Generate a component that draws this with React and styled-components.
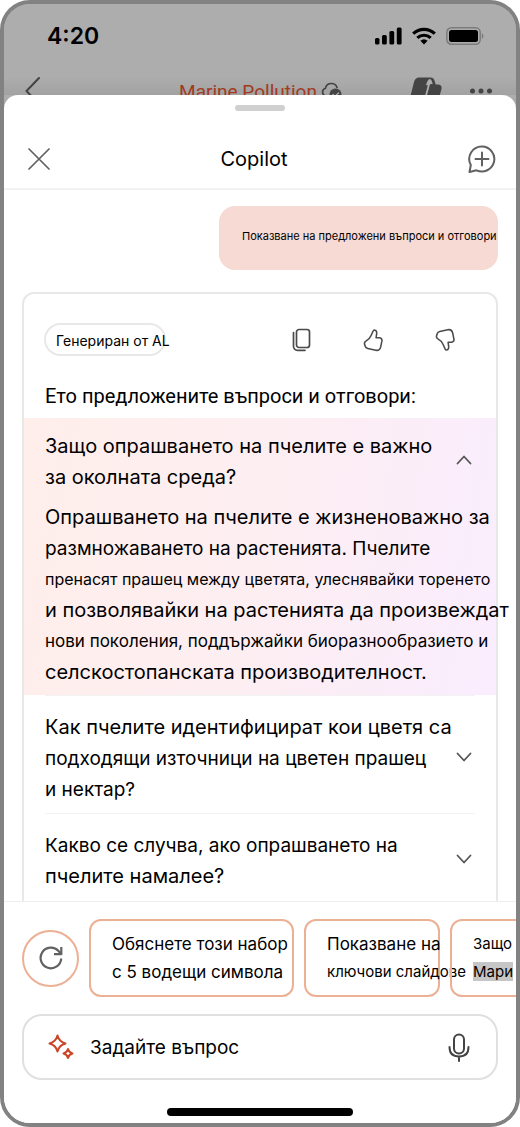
import React from "react";
import styled, { createGlobalStyle } from "styled-components";

const GlobalStyle = createGlobalStyle`
	* {
		box-sizing: border-box;
	}
	body {
		margin: 0;
		background: #fff;
		color: #000;
		font-family: Inter, "Liberation Sans", sans-serif;
	}
	button,
	input {
		font: inherit;
		color: inherit;
		padding: 0;
		border: none;
		background: none;
	}
	h1,
	h2,
	p {
		margin: 0;
		font-weight: 400;
	}
	svg {
		display: block;
		flex: none;
	}
`;

const Phone = styled.main`
	display: flex;
	flex-direction: column;
	height: 100vh;
	overflow: hidden;
	border: 4px solid #828282;
	border-radius: 30px;
	background: #adadad;
`;

const Backdrop = styled.div`
	flex: none;
	height: 91px;
	overflow: hidden;
	background: linear-gradient(#adadad 80%, #a2a2a2);
`;

const StatusBar = styled.div`
	display: flex;
	align-items: center;
	justify-content: space-between;
	height: 64px;
	padding: 0 32px 0 43px;
	font-size: 23px;
	font-weight: 600;
`;

const StatusIcons = styled.div`
	display: flex;
	align-items: center;
	gap: 10px;
`;

const DocumentBar = styled.div`
	display: grid;
	grid-template-columns: 1fr auto 1fr;
	align-items: center;
	height: 46px;
	padding: 0 24px 0 20px;
	color: #444;
`;

const DocumentTitle = styled.div`
	display: flex;
	align-items: center;
	gap: 4px;
	margin-left: 6px;
	color: #a23a22;
	font-family: Roboto, sans-serif;
	font-size: 19px;
`;

const DocumentActions = styled.div`
	display: flex;
	align-items: center;
	justify-content: flex-end;
	gap: 28px;
`;

const Sheet = styled.section`
	display: flex;
	flex: 1;
	flex-direction: column;
	min-height: 0;
	border-radius: 14px 14px 0 0;
	background: #fff;
`;

const Handle = styled.div`
	flex: none;
	width: 50px;
	height: 6px;
	margin: 10px auto 0;
	border-radius: 3px;
	background: #d0d0d0;
`;

const SheetHeader = styled.header`
	display: grid;
	flex: none;
	grid-template-columns: 1fr auto 1fr;
	align-items: center;
	height: 79px;
	padding: 18px 20px 0 24px;
	border-bottom: 2px solid #f2f2f2;
	color: #616161;
	h1 {
		padding-right: 16px;
		color: #000;
		font-size: 20px;
	}
`;

const IconButton = styled.button`
	display: flex;
	justify-self: ${(props) => props.$side || "start"};
`;

const Conversation = styled.div`
	display: flex;
	flex: 1;
	flex-direction: column;
	gap: 22px;
	min-height: 0;
	overflow: hidden;
	padding: 16px 18px 0;
`;

const UserMessage = styled.p`
	flex: none;
	align-self: flex-end;
	width: 279px;
	padding: 18px 0 22px 23px;
	border-radius: 16px;
	background: #f6dad3;
	font-size: 11px;
	line-height: 24px;
	white-space: nowrap;
`;

const AnswerCard = styled.article`
	flex: 1 0 auto;
	border: 2px solid #e8e8e8;
	border-bottom: none;
	border-radius: 12px 12px 0 0;
`;

const CardToolbar = styled.div`
	display: flex;
	align-items: center;
	justify-content: space-between;
	padding: 29px 40px 0 20px;
	color: #4a4a4a;
`;

const Badge = styled.span`
	width: 122px;
	height: 33px;
	padding-left: 10px;
	border: 2px solid #e8e8e8;
	border-radius: 17px;
	color: #000;
	font-size: 14px;
	line-height: 32px;
	white-space: nowrap;
`;

const Feedback = styled.div`
	display: flex;
	gap: 50px;
`;

const Intro = styled.p`
	padding: 25px 21px 6px;
	font-family: Roboto, sans-serif;
	font-size: 20px;
	line-height: 31px;
	white-space: nowrap;
`;

const Item = styled.div`
	padding: ${(props) => (props.$open ? "13px 0 7px 21px" : "0 21px")};
	background: ${(props) =>
		props.$open ? "linear-gradient(100deg, #ffeeea, #fdeef2 50%, #faedfe)" : "none"};
`;

const Question = styled.button`
	display: flex;
	align-items: center;
	justify-content: space-between;
	width: 100%;
	padding: ${(props) => (props.$open ? "0 24px 0 0" : "16px 3px 8px 0")};
	border-top: ${(props) => (props.$open ? "none" : "1px solid #f2f2f2")};
	text-align: left;
	svg {
		margin-bottom: 4px;
	}
`;

const Answer = styled.p`
	margin-top: 9px;
`;

const Line = styled.span`
	display: block;
	font-size: ${(props) => props.$size || 20}px;
	line-height: 31px;
	white-space: nowrap;
`;

const Footer = styled.footer`
	display: flex;
	flex: none;
	flex-direction: column;
	padding: 17px 18px 7px;
	border-top: 1px solid #eee;
	background: #fff;
`;

const Suggestions = styled.div`
	display: flex;
	align-items: center;
	gap: 10px;
	margin-right: -18px;
	overflow: hidden;
`;

const RefreshButton = styled.button`
	display: flex;
	flex: none;
	align-items: center;
	justify-content: center;
	width: 57px;
	height: 57px;
	border: 2px solid #ecb095;
	border-radius: 50%;
	color: #616161;
`;

const Chip = styled.button`
	flex: none;
	width: ${(props) => props.$width}px;
	height: 78px;
	padding-left: 21px;
	border: 2px solid #ecb095;
	border-radius: 12px;
	text-align: left;
`;

const ChipLine = styled.span`
	display: block;
	font-size: ${(props) => props.$size}px;
	line-height: 28px;
	white-space: nowrap;
	mark {
		background: #c6c6c6;
		color: inherit;
	}
`;

const Prompt = styled.label`
	display: flex;
	align-items: center;
	height: 66px;
	margin-top: 17px;
	padding: 0 26px 0 24px;
	border: 2px solid #e0e0e0;
	border-radius: 20px;
	input {
		flex: 1;
		min-width: 0;
		margin-left: 16px;
		font-size: 19px;
		outline: none;
	}
	input::placeholder {
		color: #000;
		opacity: 1;
	}
`;

const HomeBar = styled.div`
	align-self: center;
	width: 186px;
	height: 8px;
	margin-top: 28px;
	border-radius: 4px;
	background: #000;
`;

function Icon({ width = 24, height = width, children, ...rest }) {
	return (
		<svg
			width={width}
			height={height}
			viewBox={`0 0 ${width} ${height}`}
			fill="none"
			stroke="currentColor"
			strokeWidth="1.7"
			strokeLinecap="round"
			strokeLinejoin="round"
			aria-hidden="true"
			{...rest}
		>
			{children}
		</svg>
	);
}

const Signal = () => (
	<Icon width={28} height={18} fill="currentColor" stroke="none">
		<rect x="1" y="11" width="4.5" height="6.5" rx="1.5" />
		<rect x="8" y="8" width="4.8" height="9.5" rx="1.5" />
		<rect x="15.4" y="4" width="4.8" height="13.5" rx="1.5" />
		<rect x="22.8" y="0.5" width="4.8" height="17" rx="1.5" />
	</Icon>
);

const Wifi = () => (
	<Icon width={24} height={18} strokeWidth="3.2" strokeLinecap="butt">
		<path d="M1.2 6.6a15.8 15.8 0 0 1 21.6 0" />
		<path d="M5.3 10.9a9.8 9.8 0 0 1 13.4 0" />
		<path d="M8.4 13.8a5.4 5.4 0 0 1 7.2 0L12 17.4z" fill="currentColor" stroke="none" />
	</Icon>
);

const Battery = () => (
	<Icon width={38} height={18}>
		<rect x="0.8" y="0.8" width="33.4" height="16.4" rx="4.5" stroke="#7c7c7c" strokeWidth="1.5" />
		<rect x="3" y="3" width="29" height="12" rx="2.5" fill="#000" stroke="none" />
		<path d="M35.8 6.2c2.2.9 2.2 4.7 0 5.6z" fill="#7c7c7c" stroke="none" />
	</Icon>
);

const Back = () => (
	<Icon width={18} height={28}>
		<path d="M15 1 2.5 14 15 27" strokeWidth="2" />
	</Icon>
);

const CloudCheck = () => (
	<Icon width={22} height={18} stroke="#444">
		<path d="M8 14H5a4 4 0 0 1-.5-7.8C5 3.5 7.500 1.500 10.500 1.500c2.700 0 4.700 1.500 5.500 4" />
		<circle cx="14.500" cy="12.500" r="6" fill="#444" stroke="none" />
		<path d="m12 12.500 2 2 3.500-3.500" stroke="#adadad" strokeWidth="1.400" />
	</Icon>
);

const CopilotLogo = () => (
	<Icon width={32} height={28} fill="currentColor" stroke="none">
		<path d="M9 .5h11.500c2.500 0 3.600 1.500 4.300 4l.9 3H28c3 0 4 2 3.500 4.500L28.500 23c-.6 2.500-2 4-4.500 4H11c-2 0-3-1.500-3.600-3.500L7 21H3.500C1.500 21 .5 19.500 1 17L4 5C4.900 2 6.500.5 9 .5z" />
		<path
			d="M16 8.300c1-3.800 2.200-6.200 4-6.300 1.300 0 2 2.200 2.700 5-2.200 0-3.500.3-4.500 1.300z"
			fill="#adadad"
		/>
		<path d="M19 7.500 14.500 24" stroke="#adadad" strokeWidth="1.800" />
	</Icon>
);

const More = () => (
	<Icon width={22} height={6} fill="currentColor" stroke="none">
		<circle cx="2.5" cy="3" r="2.5" />
		<circle cx="11" cy="3" r="2.5" />
		<circle cx="19.5" cy="3" r="2.5" />
	</Icon>
);

const Close = () => (
	<Icon width={22}>
		<path d="m1 1 20 20M21 1 1 21" />
	</Icon>
);

const NewChat = () => (
	<Icon width={28} strokeWidth="2">
		<path d="M14 1.500A12.500 12.500 0 1 1 8.500 25.300L1.500 27l1.300-7A12.500 12.500 0 0 1 14 1.500z" />
		<path d="M14 7.500v13M7.500 14h13" />
	</Icon>
);

const Copy = () => (
	<Icon width={20} height={24}>
		<rect x="4.500" y="1.500" width="13" height="18" rx="2.500" />
		<path d="M1.500 4.500v13.800a4 4 0 0 0 4 4h7.500" />
	</Icon>
);

const Thumb = ({ down }) => (
	<Icon width={22} height={24} viewBox="0 0 24 24">
		<path
			transform={down ? "matrix(1 0 0 -1 0 24)" : undefined}
			d="M13.500 1c1.800.1 2.700 1.700 2.500 4l-.6 4.500h3.200c2.400 0 3.500 1.500 3.100 3.800l-1.300 6.200c-.7 3-2.600 4.300-5.500 3.700l-8.600-1.900c-1.500-.3-2.400-1.100-2.800-2.400l-.7-2.200c-.5-1.600.2-2.700 1.500-3.500 3.200-1.700 4.500-3.300 5.800-6.400l2-4.600c.3-.8.700-1.200 1.400-1.200z"
		/>
	</Icon>
);

const Chevron = ({ up }) => (
	<Icon width={16} height={10} stroke="#555" strokeWidth="1.8">
		<path d={up ? "m1.500 8.500 6.500-7 6.500 7" : "m1.500 1.500 6.500 7 6.500-7"} />
	</Icon>
);

const Refresh = () => (
	<Icon width={24} strokeWidth="2.2" strokeLinecap="butt">
		<path d="M22.200 12.500A10.300 10.300 0 1 1 19.500 5l2 2.200" />
		<path d="M22.300 1v7.200H15" />
	</Icon>
);

const Sparkles = () => (
	<Icon width={26} stroke="#cb4526" strokeWidth="2">
		<path d="M9.500 1.500c1.200 4.500 3.500 6.800 8 8-4.500 1.200-6.800 3.500-8 8-1.200-4.500-3.500-6.800-8-8 4.500-1.200 6.800-3.500 8-8z" />
		<path d="M20 15c.7 2.700 1.800 3.800 4.500 4.500-2.700.7-3.800 1.800-4.500 4.500-.7-2.700-1.800-3.800-4.500-4.500 2.700-.7 3.800-1.800 4.500-4.500z" />
	</Icon>
);

const Mic = () => (
	<Icon width={22} height={29} stroke="#444" strokeWidth="2">
		<rect x="6" y="1.500" width="10" height="19" rx="5" />
		<path d="M1.500 14c0 6 3.500 9.500 9.500 9.500s9.500-3.500 9.500-9.500M11 23.500V28" />
	</Icon>
);

const questions = [
	{
		lines: [{ text: "Защо опрашването на пчелите е важно" }, { text: "за околната среда?" }],
		answer: [
			{ text: "Опрашването на пчелите е жизненоважно за" },
			{ text: "размножаването на растенията. Пчелите", size: 19 },
			{ text: "пренасят прашец между цветята, улеснявайки торенето", size: 16 },
			{ text: "и позволявайки на растенията да произвеждат" },
			{ text: "нови поколения, поддържайки биоразнообразието и", size: 17 },
			{ text: "селскостопанската производителност." },
		],
	},
	{
		lines: [
			{ text: "Как пчелите идентифицират кои цветя са" },
			{ text: "подходящи източници на цветен прашец", size: 19 },
			{ text: "и нектар?", size: 19 },
		],
	},
	{
		lines: [
			{ text: "Какво се случва, ако опрашването на", size: 19 },
			{ text: "пчелите намалее?" },
		],
	},
];

const Lines = ({ lines }) =>
	lines.map(({ text, size }) => (
		<Line key={text} $size={size}>
			{text}
		</Line>
	));

export default function App() {
	return (
		<>
			<GlobalStyle />
			<Phone>
				<Backdrop>
					<StatusBar>
						<span>4:20</span>
						<StatusIcons>
							<Signal />
							<Wifi />
							<Battery />
						</StatusIcons>
					</StatusBar>
					<DocumentBar>
						<Back />
						<DocumentTitle>
							Marine Pollution
							<CloudCheck />
						</DocumentTitle>
						<DocumentActions>
							<CopilotLogo />
							<More />
						</DocumentActions>
					</DocumentBar>
				</Backdrop>
				<Sheet>
					<Handle />
					<SheetHeader>
						<IconButton aria-label="Close">
							<Close />
						</IconButton>
						<h1>Copilot</h1>
						<IconButton $side="end" aria-label="New chat">
							<NewChat />
						</IconButton>
					</SheetHeader>
					<Conversation>
						<UserMessage>Показване на предложени въпроси и отговори</UserMessage>
						<AnswerCard>
							<CardToolbar>
								<Badge>Генериран от AL</Badge>
								<Feedback>
									<IconButton aria-label="Copy">
										<Copy />
									</IconButton>
									<IconButton aria-label="Like">
										<Thumb />
									</IconButton>
									<IconButton aria-label="Dislike">
										<Thumb down />
									</IconButton>
								</Feedback>
							</CardToolbar>
							<Intro>Ето предложените въпроси и отговори:</Intro>
							{questions.map(({ lines, answer }) => (
								<Item key={lines[0].text} $open={!!answer}>
									<Question $open={!!answer} aria-expanded={!!answer}>
										<span>
											<Lines lines={lines} />
										</span>
										<Chevron up={!!answer} />
									</Question>
									{answer && (
										<Answer>
											<Lines lines={answer} />
										</Answer>
									)}
								</Item>
							))}
						</AnswerCard>
					</Conversation>
					<Footer>
						<Suggestions>
							<RefreshButton aria-label="Refresh">
								<Refresh />
							</RefreshButton>
							<Chip $width={205}>
								<ChipLine $size={17}>Обяснете този набор</ChipLine>
								<ChipLine $size={17}>с 5 водещи символа</ChipLine>
							</Chip>
							<Chip $width={136}>
								<ChipLine $size={17}>Показване на</ChipLine>
								<ChipLine $size={15}>ключови слайдове</ChipLine>
							</Chip>
							<Chip $width={136}>
								<ChipLine $size={15}>Защо</ChipLine>
								<ChipLine $size={15}>
									<mark>Мари</mark>
								</ChipLine>
							</Chip>
						</Suggestions>
						<Prompt>
							<Sparkles />
							<input type="text" placeholder="Задайте въпрос" aria-label="Задайте въпрос" />
							<IconButton aria-label="Voice">
								<Mic />
							</IconButton>
						</Prompt>
						<HomeBar />
					</Footer>
				</Sheet>
			</Phone>
		</>
	);
}
